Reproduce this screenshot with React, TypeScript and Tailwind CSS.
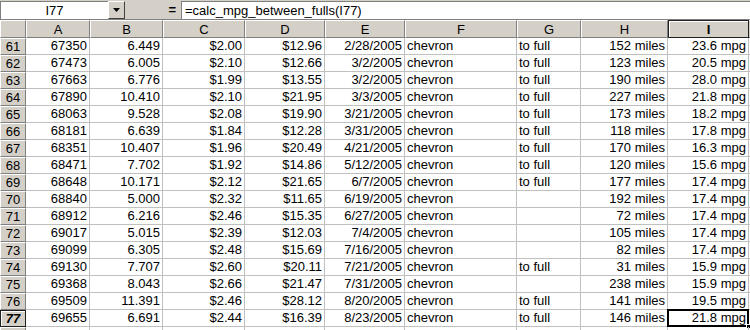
import React from "react";

const rows: string[][] = [
  ["61", "67350", "6.449", "$2.00", "$12.96", "2/28/2005", "chevron", "to full", "152 miles", "23.6 mpg"],
  ["62", "67473", "6.005", "$2.10", "$12.66", "3/2/2005", "chevron", "to full", "123 miles", "20.5 mpg"],
  ["63", "67663", "6.776", "$1.99", "$13.55", "3/2/2005", "chevron", "to full", "190 miles", "28.0 mpg"],
  ["64", "67890", "10.410", "$2.10", "$21.95", "3/3/2005", "chevron", "to full", "227 miles", "21.8 mpg"],
  ["65", "68063", "9.528", "$2.08", "$19.90", "3/21/2005", "chevron", "to full", "173 miles", "18.2 mpg"],
  ["66", "68181", "6.639", "$1.84", "$12.28", "3/31/2005", "chevron", "to full", "118 miles", "17.8 mpg"],
  ["67", "68351", "10.407", "$1.96", "$20.49", "4/21/2005", "chevron", "to full", "170 miles", "16.3 mpg"],
  ["68", "68471", "7.702", "$1.92", "$14.86", "5/12/2005", "chevron", "to full", "120 miles", "15.6 mpg"],
  ["69", "68648", "10.171", "$2.12", "$21.65", "6/7/2005", "chevron", "to full", "177 miles", "17.4 mpg"],
  ["70", "68840", "5.000", "$2.32", "$11.65", "6/19/2005", "chevron", "", "192 miles", "17.4 mpg"],
  ["71", "68912", "6.216", "$2.46", "$15.35", "6/27/2005", "chevron", "", "72 miles", "17.4 mpg"],
  ["72", "69017", "5.015", "$2.39", "$12.03", "7/4/2005", "chevron", "", "105 miles", "17.4 mpg"],
  ["73", "69099", "6.305", "$2.48", "$15.69", "7/16/2005", "chevron", "", "82 miles", "17.4 mpg"],
  ["74", "69130", "7.707", "$2.60", "$20.11", "7/21/2005", "chevron", "to full", "31 miles", "15.9 mpg"],
  ["75", "69368", "8.043", "$2.66", "$21.47", "7/31/2005", "chevron", "", "238 miles", "15.9 mpg"],
  ["76", "69509", "11.391", "$2.46", "$28.12", "8/20/2005", "chevron", "to full", "141 miles", "19.5 mpg"],
  ["77", "69655", "6.691", "$2.44", "$16.39", "8/23/2005", "chevron", "to full", "146 miles", "21.8 mpg"],
  ["", "", "", "", "", "", "", "", "", ""],
];

const cols = ["A", "B", "C", "D", "E", "F", "G", "H", "I"];
const leftCols = new Set([5, 6]);

const gridCols = "grid grid-cols-[26px_64px_73px_82px_80px_80px_112px_64px_87px_81px_1fr]";

export default function App() {
  return (
    <div
      className="w-[750px] h-[330px] overflow-hidden bg-white text-black"
      style={{ fontFamily: '"Liberation Sans", Arial, sans-serif' }}
    >
      {/* Formula bar */}
      <div className="h-[20px] bg-[#d4d0c8] flex items-start pt-[1px] border-b border-[#808080]">
        <div className="w-[108px] h-[18px] bg-white border-t border-l border-[#808080] flex items-center justify-center text-[13px] leading-none">
          I77
        </div>
        <div className="w-[17px] h-[18px] bg-[#d4d0c8] border-t border-l border-white border-r border-b border-r-[#404040] border-b-[#404040] flex items-center justify-center">
          <svg width="7" height="4" viewBox="0 0 7 4">
            <polygon points="0,0 7,0 3.5,4" fill="#000" />
          </svg>
        </div>
        <div className="w-[56px] h-[18px] flex items-center justify-end pr-[5px] text-[13px] font-bold">
          =
        </div>
        <div className="flex-1 h-[18px] bg-white border-t border-l border-[#808080] flex items-center pl-[3px] text-[13px] leading-none">
          =calc_mpg_between_fulls(I77)
        </div>
      </div>

      {/* Column headers */}
      <div className={`${gridCols} h-[18px] bg-[#d4d0c8] text-[13px]`}>
        <div className="border-t border-l border-white border-r border-b border-r-[#808080] border-b-[#808080]" />
        {cols.map((c) =>
          c === "I" ? (
            <div
              key={c}
              className="border border-[#202020] shadow-[inset_1px_1px_0_#ffffff] flex items-center justify-center font-bold leading-none"
            >
              {c}
            </div>
          ) : (
            <div
              key={c}
              className="border-t border-l border-white border-r border-b border-r-[#808080] border-b-[#808080] flex items-center justify-center leading-none"
            >
              {c}
            </div>
          )
        )}
        <div className="border-t border-white border-b border-b-[#808080]" />
      </div>

      {/* Rows */}
      {rows.map((r, ri) => {
        const isSel = r[0] === "77";
        return (
          <div key={ri} className={`${gridCols} h-[17px] text-[13px] leading-none`}>
            {isSel ? (
              <div className="bg-[#d4d0c8] border border-[#202020] shadow-[inset_1px_1px_0_#ffffff] flex items-center justify-center font-bold italic">
                {r[0]}
              </div>
            ) : (
              <div className="bg-[#d4d0c8] border-t border-l border-white border-r border-b border-r-[#808080] border-b-[#808080] flex items-center justify-center">
                {r[0]}
              </div>
            )}
            {r.slice(1).map((v, ci) => {
              const isActive = isSel && ci === 8;
              return (
                <div
                  key={ci}
                  className={`relative border-r border-b border-[#c0c0c0] flex items-end pb-[2px] whitespace-nowrap overflow-visible ${
                    leftCols.has(ci) ? "justify-start pl-[2px]" : "justify-end pr-[2px]"
                  }`}
                >
                  {v}
                  {isActive && (
                    <>
                      <div className="absolute left-[-1px] top-[-1px] right-[-1px] bottom-[-1px] border-2 border-black" />
                      <div className="absolute right-[-3px] bottom-[-3px] w-[5px] h-[5px] bg-black border border-white" />
                    </>
                  )}
                </div>
              );
            })}
            <div className="border-b border-[#c0c0c0]" />
          </div>
        );
      })}
    </div>
  );
}
